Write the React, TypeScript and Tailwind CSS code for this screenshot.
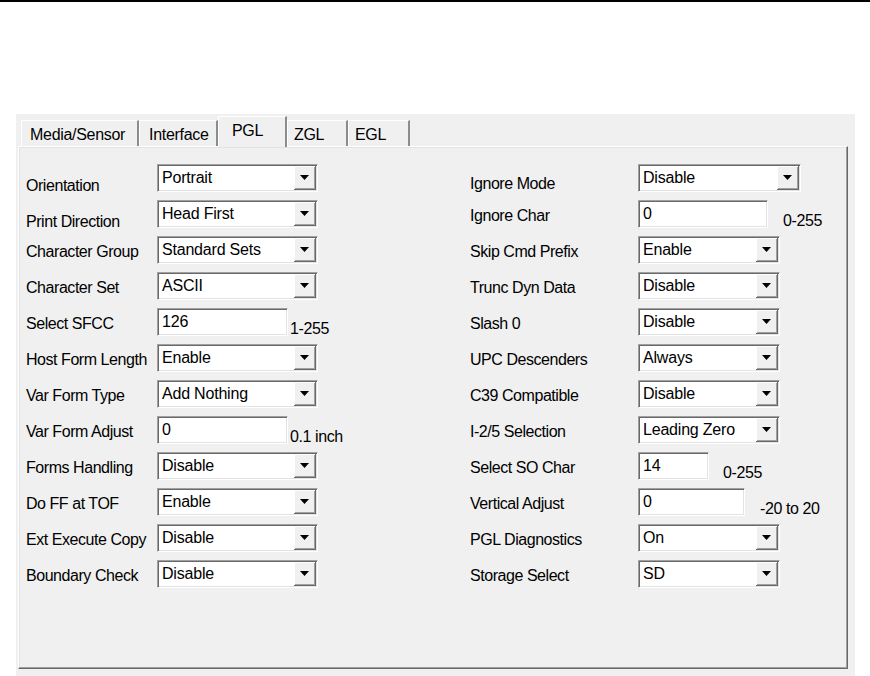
import React from 'react';

type Row =
  | { label: string; kind: 'select'; value: string; w: string; low?: string }
  | { label: string; kind: 'text'; value: string; w: string; suffix: string; gap: string; low?: string };

const LEFT: Row[] = [
  { label: 'Orientation', kind: 'select', value: 'Portrait', w: 'w-[161px]', low: 'translate-y-[8px]' },
  { label: 'Print Direction', kind: 'select', value: 'Head First', w: 'w-[161px]', low: 'translate-y-[8px]' },
  { label: 'Character Group', kind: 'select', value: 'Standard Sets', w: 'w-[161px]' },
  { label: 'Character Set', kind: 'select', value: 'ASCII', w: 'w-[161px]' },
  { label: 'Select SFCC', kind: 'text', value: '126', w: 'w-[131px]', suffix: '1-255', gap: 'ml-[2px]' },
  { label: 'Host Form Length', kind: 'select', value: 'Enable', w: 'w-[161px]' },
  { label: 'Var Form Type', kind: 'select', value: 'Add Nothing', w: 'w-[161px]' },
  { label: 'Var Form Adjust', kind: 'text', value: '0', w: 'w-[131px]', suffix: '0.1 inch', gap: 'ml-[2px]' },
  { label: 'Forms Handling', kind: 'select', value: 'Disable', w: 'w-[161px]' },
  { label: 'Do FF at TOF', kind: 'select', value: 'Enable', w: 'w-[161px]' },
  { label: 'Ext Execute Copy', kind: 'select', value: 'Disable', w: 'w-[161px]' },
  { label: 'Boundary Check', kind: 'select', value: 'Disable', w: 'w-[161px]' },
];

const RIGHT: Row[] = [
  { label: 'Ignore Mode', kind: 'select', value: 'Disable', w: 'w-[163px]', low: 'translate-y-[6px]' },
  { label: 'Ignore Char', kind: 'text', value: '0', w: 'w-[130px]', suffix: '0-255', gap: 'ml-[15px]' },
  { label: 'Skip Cmd Prefix', kind: 'select', value: 'Enable', w: 'w-[142px]' },
  { label: 'Trunc Dyn Data', kind: 'select', value: 'Disable', w: 'w-[142px]' },
  { label: 'Slash 0', kind: 'select', value: 'Disable', w: 'w-[142px]' },
  { label: 'UPC Descenders', kind: 'select', value: 'Always', w: 'w-[142px]' },
  { label: 'C39 Compatible', kind: 'select', value: 'Disable', w: 'w-[142px]' },
  { label: 'I-2/5 Selection', kind: 'select', value: 'Leading Zero', w: 'w-[142px]' },
  { label: 'Select SO Char', kind: 'text', value: '14', w: 'w-[71px]', suffix: '0-255', gap: 'ml-[14px]' },
  { label: 'Vertical Adjust', kind: 'text', value: '0', w: 'w-[107px]', suffix: '-20 to 20', gap: 'ml-[15px]' },
  { label: 'PGL Diagnostics', kind: 'select', value: 'On', w: 'w-[142px]' },
  { label: 'Storage Select', kind: 'select', value: 'SD', w: 'w-[142px]' },
];

const TABS = [
  { label: 'Media/Sensor', w: 'w-[118px]', pl: 'pl-[8px]' },
  { label: 'Interface', w: 'w-[79px]', pl: 'pl-[9px]' },
  { label: 'PGL', w: 'w-[69px]', pl: 'pl-[13px]', active: true },
  { label: 'ZGL', w: 'w-[61px]', pl: 'pl-[6px]' },
  { label: 'EGL', w: 'w-[62px]', pl: 'pl-[6px]' },
];

// sunken 3D field, classic windows look
const SUNKEN =
  'h-[28px] bg-white border border-t-[#a0a0a0] border-l-[#a0a0a0] border-r-white border-b-white shadow-[inset_1px_1px_0_#696969,inset_-1px_-1px_0_#e3e3e3] p-[1px] flex';

function Field({ row }: { row: Row }) {
  return (
    <div className="flex items-center h-[28px]">
      <div className={`${SUNKEN} ${row.w}`}>
        <div className="flex-1 pl-[3px] text-[16px] tracking-[-0.2px] leading-[24px] text-black whitespace-nowrap overflow-hidden">
          {row.value}
        </div>
        {row.kind === 'select' && (
          <div className="w-[22px] h-full bg-[#f0f0f0] border-r border-b border-r-[#696969] border-b-[#696969] shadow-[inset_1px_1px_0_#ffffff,inset_-1px_-1px_0_#a0a0a0] flex items-center justify-center">
            <svg width="9" height="5" viewBox="0 0 9 5">
              <polygon points="0,0 9,0 4.5,5" fill="#000" />
            </svg>
          </div>
        )}
      </div>
      {row.kind === 'text' && (
        <span className={`${row.gap} translate-y-[7px] text-[16px] tracking-[-0.4px] whitespace-nowrap`}>
          {row.suffix}
        </span>
      )}
    </div>
  );
}

function Column({ rows, labelW }: { rows: Row[]; labelW: string }) {
  return (
    <div className="flex flex-col gap-[8px]">
      {rows.map((r) => (
        <div key={r.label} className="flex items-center h-[28px]">
          <div className={`${labelW} shrink-0 text-[16px] tracking-[-0.45px] whitespace-nowrap ${r.low ?? 'translate-y-[2px]'}`}>
            {r.label}
          </div>
          <Field row={r} />
        </div>
      ))}
    </div>
  );
}

export default function App() {
  return (
    <div
      className="w-[870px] h-[676px] bg-white overflow-hidden text-black"
      style={{ fontFamily: '"Liberation Sans", Arial, sans-serif' }}
    >
      <div className="h-[2px] bg-black" />
      <div className="mt-[112px] ml-[16px] w-[839px] h-[562px] bg-[#f0f0f0] flex flex-col">
        {/* Tabs */}
        <div className="h-[32px] flex items-end pl-[5px] relative z-10">
          {TABS.map((t) =>
            t.active ? (
              <div
                key={t.label}
                className={`${t.w} ${t.pl} h-[31px] -mb-[1px] bg-[#f0f0f0] border-t border-l border-t-white border-l-white border-r-2 border-r-[#8c8c8c] pt-[4px] text-[16px] tracking-[-0.3px] leading-[20px]`}
              >
                {t.label}
              </div>
            ) : (
              <div
                key={t.label}
                className={`${t.w} ${t.pl} h-[26px] bg-[#f0f0f0] border-t border-l border-t-white border-l-white border-r-2 border-r-[#8c8c8c] pt-[4px] text-[16px] tracking-[-0.3px] leading-[20px]`}
              >
                {t.label}
              </div>
            )
          )}
        </div>

        {/* Panel */}
        <div className="ml-[2px] w-[830px] h-[523px] border border-t-white border-l-white border-r-[#696969] border-b-[#696969] shadow-[inset_-1px_-1px_0_#a0a0a0,inset_1px_1px_0_#e3e3e3] pt-[17px] pl-[7px] flex">
          <div className="w-[444px]">
            <Column rows={LEFT} labelW="w-[131px]" />
          </div>
          <div>
            <Column rows={RIGHT} labelW="w-[168px]" />
          </div>
        </div>
      </div>
    </div>
  );
}
